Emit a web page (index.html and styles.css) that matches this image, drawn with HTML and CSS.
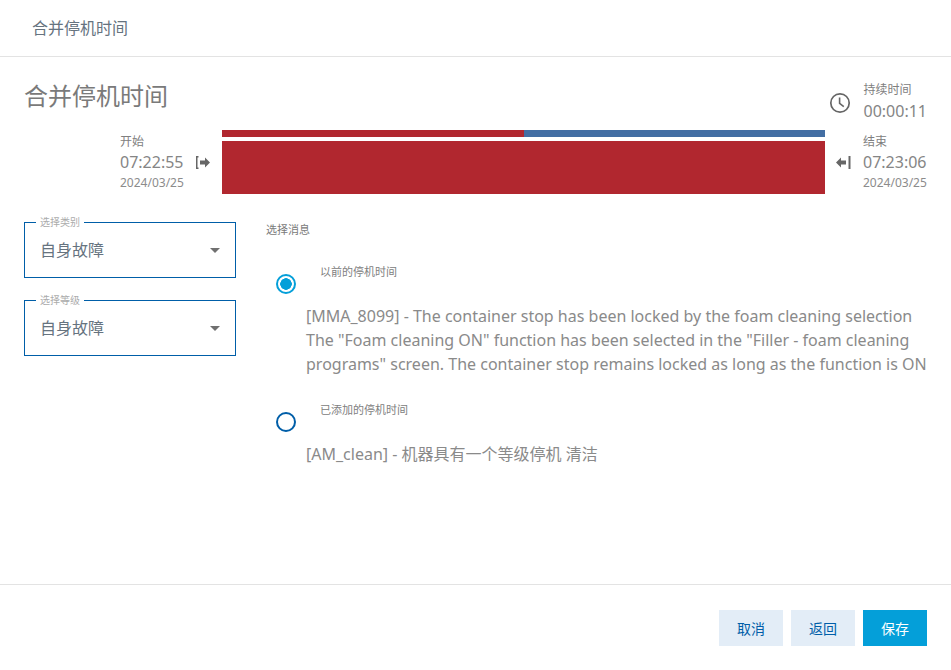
FILE: index.html
```html
<!DOCTYPE html>
<html lang="zh-CN">
<head>
  <meta charset="UTF-8">
  <title>合并停机时间</title>
  <link rel="stylesheet" href="styles.css">
</head>
<body>
  <div class="dialog">
    <header class="dialog-bar">合并停机时间</header>

    <main class="dialog-body">
      <div class="top-row">
        <h1>合并停机时间</h1>
        <div class="duration">
          <svg class="clock" width="22" height="22" viewBox="0 0 22 22">
            <circle cx="11" cy="11" r="9.2" fill="none" stroke="#666" stroke-width="1.7"/>
            <path d="M10.6 5.5V11.4L14.8 14.6" fill="none" stroke="#666" stroke-width="1.6"/>
          </svg>
          <div class="time-block">
            <span class="label">持续时间</span>
            <span class="time">00:00:11</span>
          </div>
        </div>
      </div>

      <div class="timeline">
        <div class="time-block start">
          <span class="label">开始</span>
          <span class="time">07:22:55</span>
          <span class="date">2024/03/25</span>
        </div>
        <svg class="arrow" width="16" height="13" viewBox="0 0 16 13">
          <path d="M1 0H3.5V1.5H2.5V11.5H3.5V13H1Z" fill="#666"/>
          <path d="M5 4.5H10V1.5L15 6.5L10 11.5V8.5H5Z" fill="#666"/>
        </svg>
        <div class="bars">
          <div class="bar-thin"><span class="part-red"></span><span class="part-blue"></span></div>
          <div class="bar-main"></div>
        </div>
        <svg class="arrow" width="16" height="13" viewBox="0 0 16 13">
          <path d="M11 4.5H6V1.5L1 6.5L6 11.5V8.5H11Z" fill="#666"/>
          <path d="M13.5 0H15.5V13H13.5Z" fill="#666"/>
        </svg>
        <div class="time-block end">
          <span class="label">结束</span>
          <span class="time">07:23:06</span>
          <span class="date">2024/03/25</span>
        </div>
      </div>

      <div class="form-row">
        <div class="selects">
          <div class="select">
            <span class="select-label">选择类别</span>
            <span>自身故障</span>
            <i class="caret"></i>
          </div>
          <div class="select">
            <span class="select-label">选择等级</span>
            <span>自身故障</span>
            <i class="caret"></i>
          </div>
        </div>

        <div class="messages">
          <div class="messages-title">选择消息</div>

          <div class="option first">
            <span class="radio checked"></span>
            <div class="option-text">
              <div class="option-label">以前的停机时间</div>
              <p>[MMA_8099] - The container stop has been locked by the foam cleaning selection The "Foam cleaning ON" function has been selected in the "Filler - foam cleaning programs" screen. The container stop remains locked as long as the function is ON</p>
            </div>
          </div>

          <div class="option">
            <span class="radio"></span>
            <div class="option-text">
              <div class="option-label">已添加的停机时间</div>
              <p>[AM_clean] - 机器具有一个等级停机 清洁</p>
            </div>
          </div>
        </div>
      </div>
    </main>

    <footer class="dialog-footer">
      <button class="btn btn-light">取消</button>
      <button class="btn btn-light">返回</button>
      <button class="btn btn-primary">保存</button>
    </footer>
  </div>
</body>
</html>
```

FILE: styles.css
```css
* {
  box-sizing: border-box;
}

html, body {
  height: 100%;
}

body {
  margin: 0;
  background: white;
  color: #6f6f6f;
  font-family: "Noto Sans", "Open Sans", "Noto Sans CJK SC", sans-serif;
}

.dialog {
  display: flex;
  flex-direction: column;
  height: 670px;
}

.dialog-bar {
  height: 57px;
  padding: 0 32px;
  border-bottom: 1px solid #e3e3e3;
  color: #66737f;
  font-size: 16px;
  line-height: 56px;
}

.dialog-body {
  flex: 1;
  padding: 0 24px;
}

.top-row {
  display: flex;
  justify-content: space-between;
  height: 73px;
  padding-top: 21px;
}

h1 {
  margin: 0;
  font-size: 24px;
  font-weight: 400;
  line-height: 36px;
  color: #7a7a7a;
}

.duration {
  display: flex;
  align-items: center;
  gap: 13px;
  height: 46px;
  margin-top: 1px;
}

.clock {
  margin-top: 2px;
}

.time-block {
  display: flex;
  flex-direction: column;
}

.label {
  font-size: 12px;
  line-height: 18px;
  color: #808080;
}

.time {
  font-size: 16px;
  line-height: 24px;
  color: #858585;
}

.date {
  font-size: 12px;
  line-height: 18px;
  color: #8c8c8c;
}

.timeline {
  display: flex;
  align-items: flex-start;
  margin-left: 96px;
}

.time-block.start {
  width: 75px;
  margin-top: 2px;
}

.time-block.end {
  width: 64px;
  margin-top: 2px;
}

.time-block.start .label,
.time-block.end .label {
  padding-top: 1px;
  margin-bottom: -1px;
}

.arrow {
  margin-top: 26px;
}

.timeline .arrow:first-of-type {
  margin-right: 11px;
}

.timeline .arrow:last-of-type {
  margin-left: 10px;
  margin-right: 12px;
}

.bars {
  flex: 1;
}

.bar-thin {
  display: flex;
  height: 7px;
  margin-bottom: 4px;
}

.part-red {
  width: 302px;
  background: #b1272f;
}

.part-blue {
  flex: 1;
  background: #436ea3;
}

.bar-main {
  height: 53px;
  background: #b1272f;
}

.form-row {
  display: flex;
  margin-top: 28px;
}

.selects {
  display: flex;
  flex-direction: column;
  gap: 22px;
  width: 212px;
}

.select {
  position: relative;
  display: flex;
  align-items: center;
  height: 56px;
  padding: 0 15px 2px;
  border: 1px solid #005ea8;
  color: #66737f;
  font-size: 16px;
}

.select-label {
  position: absolute;
  top: -8px;
  left: 11px;
  padding: 0 4px;
  background: white;
  color: #ababab;
  font-size: 10px;
  line-height: 14px;
}

.caret {
  position: absolute;
  top: 25px;
  right: 15px;
  border-top: 5px solid #707070;
  border-left: 5px solid transparent;
  border-right: 5px solid transparent;
}

.messages {
  flex: 1;
  margin-left: 30px;
}

.messages-title {
  padding-top: 1px;
  font-size: 11px;
  line-height: 14px;
  color: #7a7a7a;
}

.option {
  display: flex;
  margin-top: 26px;
}

.option.first {
  margin-top: 27px;
}

.radio {
  flex: none;
  width: 20px;
  height: 20px;
  margin: 10px 10px 0 10px;
  border: 2px solid #005ea8;
  border-radius: 50%;
}

.radio.checked {
  border-color: #049fd9;
  background: radial-gradient(circle, #049fd9 0 5.5px, white 6px);
}

.option-text {
  flex: 1;
}

.option-label {
  margin-left: 14px;
  font-size: 11px;
  line-height: 16px;
  color: #808080;
}

.option-text p {
  margin: 24px 0 0;
  font-size: 16px;
  line-height: 24px;
  color: #8a8a8a;
}

.dialog-footer {
  display: flex;
  justify-content: flex-end;
  gap: 8px;
  height: 86px;
  padding: 25px 24px 0 0;
  border-top: 1px solid #e3e3e3;
}

.btn {
  width: 64px;
  height: 36px;
  border: none;
  font-family: inherit;
  font-size: 14px;
  font-weight: 400;
  cursor: pointer;
}

.btn-light {
  background: #e3edf7;
  color: #005ea8;
}

.btn-primary {
  background: #049fd9;
  color: white;
}
```
